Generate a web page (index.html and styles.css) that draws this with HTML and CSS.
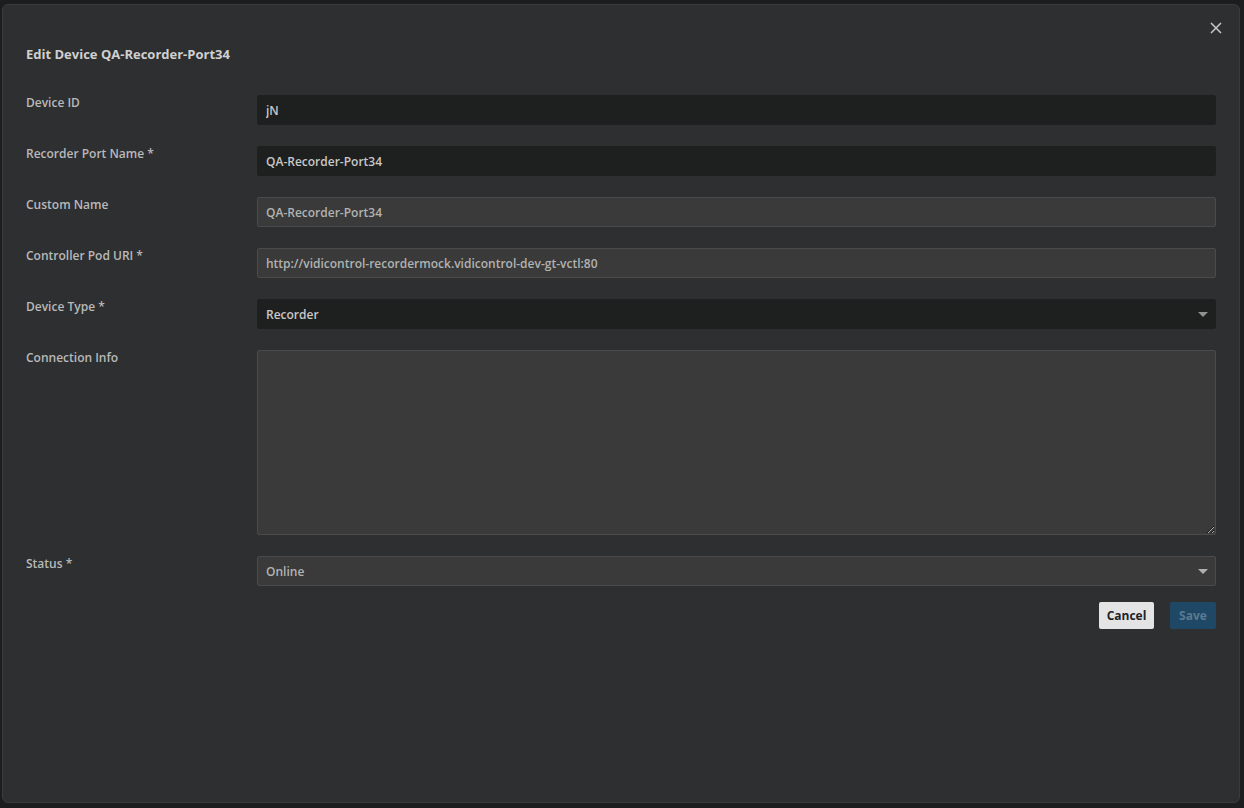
FILE: index.html
```html
<!DOCTYPE html>
<html lang="en">
<head>
<meta charset="utf-8">
<title>Edit Device</title>
<link rel="stylesheet" href="styles.css">
</head>
<body>
<div class="backdrop">
  <div class="dialog" role="dialog" aria-label="Edit Device QA-Recorder-Port34">
    <button class="close" aria-label="Close">
      <svg width="12" height="12" viewBox="0 0 12 12"><path d="M1 1 L11 11 M11 1 L1 11" stroke="#c9c9c9" stroke-width="1.5" fill="none"/></svg>
    </button>
    <h2 class="title">Edit Device QA-Recorder-Port34</h2>
    <form class="form">
      <label class="label">Device ID</label>
      <input class="field dark" value="jN" readonly>

      <label class="label">Recorder Port Name *</label>
      <input class="field dark" value="QA-Recorder-Port34" readonly>

      <label class="label">Custom Name</label>
      <input class="field light" value="QA-Recorder-Port34">

      <label class="label">Controller Pod URI *</label>
      <input class="field light" value="http://vidicontrol-recordermock.vidicontrol-dev-gt-vctl:80">

      <label class="label">Device Type *</label>
      <div class="field dark select">
        <span>Recorder</span>
        <svg class="caret" width="10" height="5" viewBox="0 0 10 5"><path d="M0 0 L10 0 L5 5 Z" fill="#8f9090"/></svg>
      </div>

      <label class="label">Connection Info</label>
      <textarea class="field light area"></textarea>

      <label class="label">Status *</label>
      <div class="field light select">
        <span>Online</span>
        <svg class="caret" width="10" height="5" viewBox="0 0 10 5"><path d="M0 0 L10 0 L5 5 Z" fill="#b0b0b0"/></svg>
      </div>

      <div class="actions">
        <button type="button" class="btn cancel">Cancel</button>
        <button type="button" class="btn save" disabled>Save</button>
      </div>
    </form>
  </div>
</div>
</body>
</html>
```

FILE: styles.css
```css
html, body {
  margin: 0;
  padding: 0;
  background: #1c1d1e;
  font-family: "Open Sans", "Noto Sans", sans-serif;
}

.backdrop {
  padding: 4px 4px 5px 2px;
  height: 808px;
  box-sizing: border-box;
}

.dialog {
  position: relative;
  box-sizing: border-box;
  height: 799px;
  background: #2e2f31;
  border: 1px solid #3a3b3d;
  border-radius: 6px;
  padding: 40px 23px 0 23px;
}

.close {
  position: absolute;
  top: 17px;
  right: 17px;
  width: 12px;
  height: 12px;
  padding: 0;
  border: 0;
  background: none;
  display: flex;
}

.title {
  margin: 0 0 32px 0;
  font-size: 13px;
  line-height: 18px;
  font-weight: 700;
  color: #d0d0d0;
}

.form {
  display: grid;
  grid-template-columns: 231px 1fr;
  row-gap: 21px;
}

.label {
  font-size: 12px;
  line-height: 16px;
  font-weight: 600;
  color: #b9b9b9;
}

.field {
  box-sizing: border-box;
  height: 30px;
  width: 100%;
  margin: 0;
  padding: 0 8px;
  border-radius: 2px;
  font-family: "Open Sans", "Noto Sans", sans-serif;
  font-size: 12px;
  outline: none;
}

.dark {
  background: #1e1f1f;
  border: 1px solid #1e1f1f;
  color: #c8c8c8;
  font-weight: 600;
}

.light {
  background: #393a39;
  border: 1px solid #4a4b4a;
  color: #b2b2b2;
  font-weight: 600;
}

.select {
  display: flex;
  align-items: center;
  justify-content: space-between;
  padding-right: 7px;
}

.area {
  height: 185px;
  padding: 8px;
  resize: vertical;
}

.actions {
  grid-column: 2;
  display: flex;
  justify-content: flex-end;
  gap: 16px;
  margin-top: -5px;
}

.btn {
  height: 27px;
  border: 0;
  border-radius: 2px;
  font-family: "Open Sans", "Noto Sans", sans-serif;
  font-size: 12px;
  font-weight: 700;
  padding: 0;
}

.cancel {
  width: 55px;
  background: #e4e4e4;
  color: #1f2328;
}

.save {
  width: 46px;
  background: #1e4866;
  color: #5b7a90;
}
```
